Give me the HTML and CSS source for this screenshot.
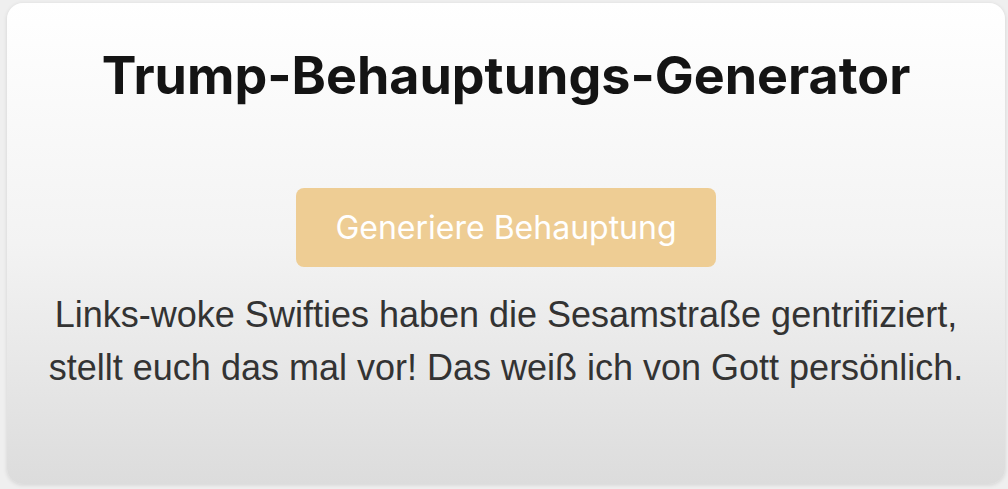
FILE: index.html
```html
<!DOCTYPE HTML><html>
<head>
  <title>Trump-Behauptungs-Generator</title>
  <meta name="viewport" content="width=device-width, initial-scale=1">
  <link rel="stylesheet" href="styles.css">
</head>
<body>
  <div class="card">
    <h1 class="title">Trump-Behauptungs-Generator</h1>
    <button class="button" id="generateBtn">Generiere Behauptung</button>
    <p class="claim" id="claim">Links-woke Swifties haben die Sesamstraße gentrifiziert, stellt euch das mal vor! Das weiß ich von Gott persönlich.</p>
  </div>
</body>
</html>
```

FILE: styles.css
```css
html {
    background-color: #efefef;
  }
body {
    margin: 0;
    padding: 3px 3px 5px 7px;
    font-family: "Liberation Sans", Arial, sans-serif;
    text-align: center;
  }
.card {
    height: 481px;
    box-sizing: border-box;
    padding: 41px 40px 0 40px;
    border-radius: 16px;
    background: linear-gradient(to bottom, #ffffff 0%, #f3f3f3 50%, #dcdcdc 100%);
    box-shadow: 0 1px 4px rgba(0, 0, 0, 0.12);
  }
.title {
    font-family: Inter, sans-serif;
    font-size: 52px;
    font-weight: 700;
    color: #141414;
    margin: 0 0 81px 0;
    line-height: 63px;
  }
.button {
    font-family: Inter, sans-serif;
    background-color: #eecd94;
    border: none;
    color: #ffffff;
    width: 420px;
    height: 79px;
    font-size: 32px;
    border-radius: 8px;
    cursor: pointer;
  }
.claim {
    font-size: 36px;
    line-height: 53px;
    color: #333333;
    margin: 21px 0 0 0;
  }
```
